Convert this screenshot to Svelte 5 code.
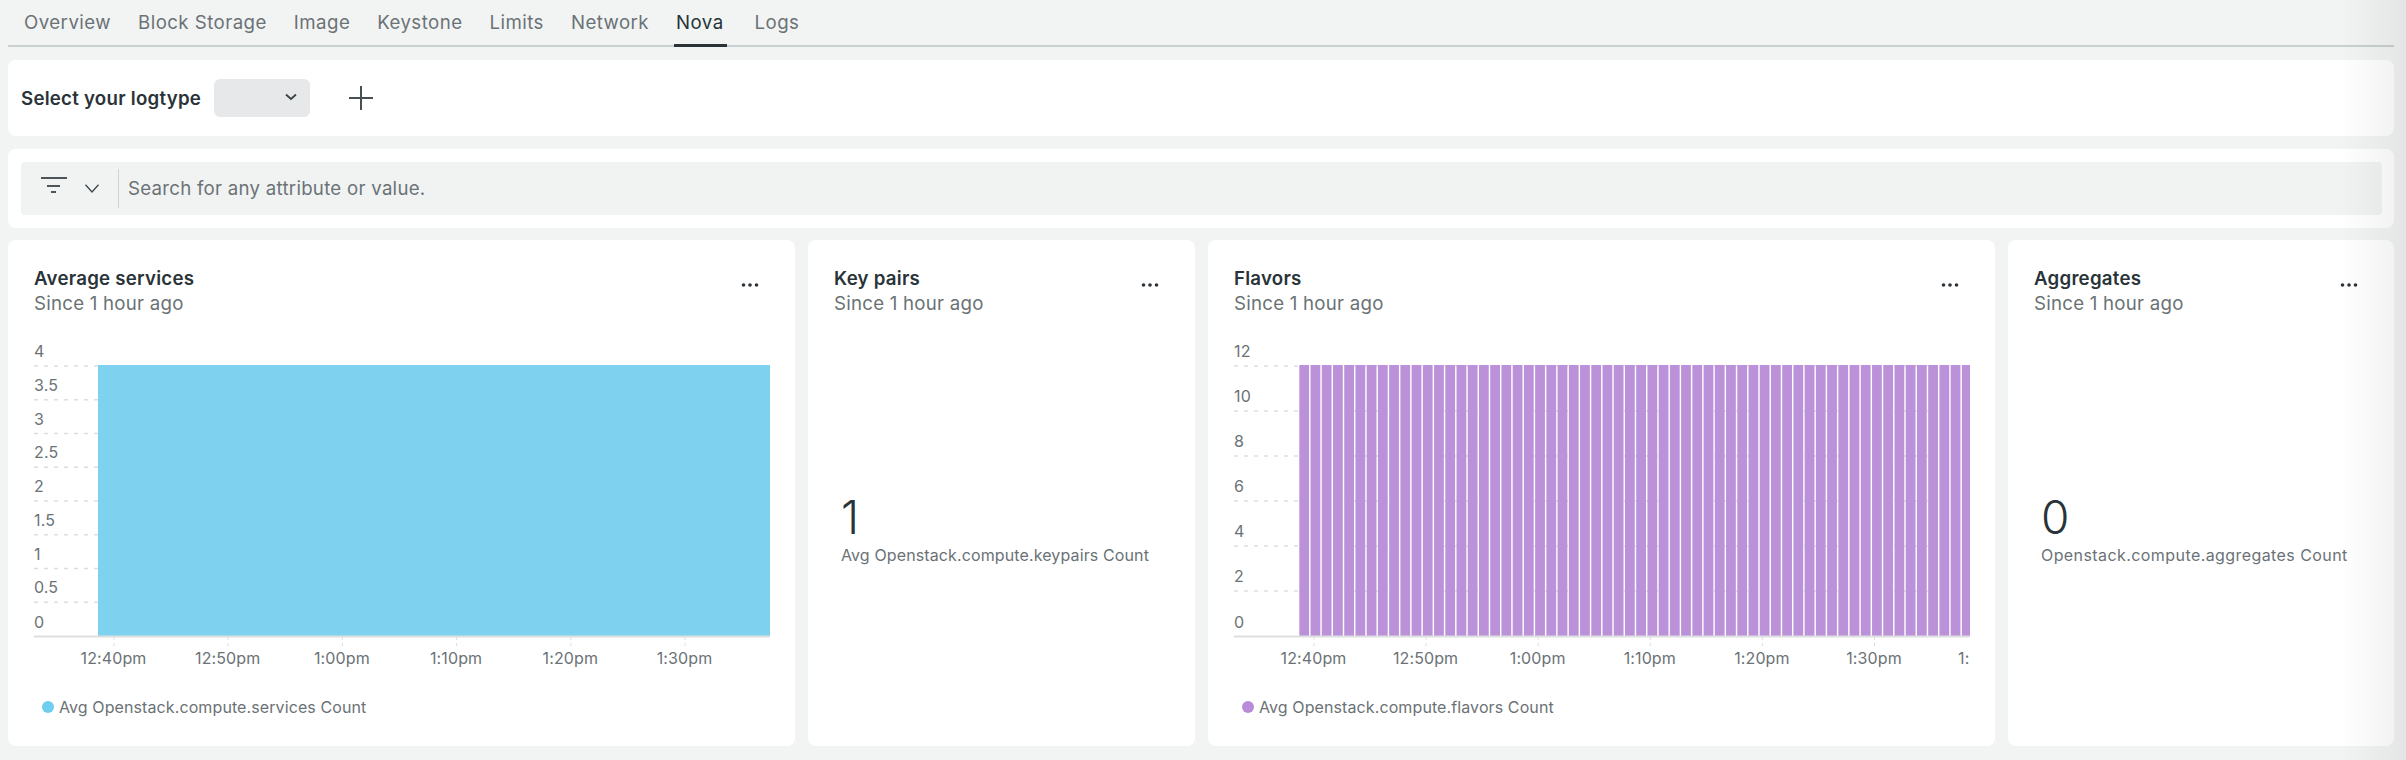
<script>
  const tabs = ['Overview', 'Block Storage', 'Image', 'Keystone', 'Limits', 'Network', 'Nova', 'Logs'];
  const blueGrid = ['4', '3.5', '3', '2.5', '2', '1.5', '1', '0.5', '0'].map((t, i) => ({ t, y: 26 + i * 33.75 }));
  const purpleGrid = ['12', '10', '8', '6', '4', '2', '0'].map((t, i) => ({ t, y: 26 + i * 45 }));
  const blueTicks = ['12:40pm', '12:50pm', '1:00pm', '1:10pm', '1:20pm', '1:30pm'].map((t, i) => ({ t, x: 80 + i * 114.2 }));
  const purpleTicks = ['12:40pm', '12:50pm', '1:00pm', '1:10pm', '1:20pm', '1:30pm', '1:40pm'].map((t, i) => ({ t, x: 80 + i * 112.1 }));
  const bars = Array.from({ length: 60 }, (_, i) => 65.3 + i * 11.23);
</script>

{#snippet dots()}
  <svg class="dots" width="20" height="6" viewBox="0 0 20 6" aria-hidden="true">
    <circle cx="3.5" cy="3" r="1.8" />
    <circle cx="10" cy="3" r="1.8" />
    <circle cx="16.5" cy="3" r="1.8" />
  </svg>
{/snippet}

{#snippet head(title)}
  <div class="head">
    <div>
      <div class="title">{title}</div>
      <div class="since">Since 1 hour ago</div>
    </div>
    {@render dots()}
  </div>
{/snippet}

{#snippet axes(grid, ticks)}
  {#each grid as g}
    {#if g.t !== '0'}
      <line class="grid" x1="0" x2="736" y1={g.y} y2={g.y} />
    {/if}
    <text class="lbl" x="0" y={g.t === '0' ? 288 : g.y - 9}>{g.t}</text>
  {/each}
  {#each ticks as k}
    <line class="tick" x1={k.x} x2={k.x} y1="297" y2="306" />
    <text class="lbl" x={k.x - 0.5} y="324" text-anchor="middle">{k.t}</text>
  {/each}
{/snippet}

<div class="page">
  <nav class="tabs">
    {#each tabs as t}
      <span class="tab" class:active={t === 'Nova'}>{t}</span>
    {/each}
  </nav>

  <section class="panel logbar">
    <span class="logtitle">Select your logtype</span>
    <div class="select">
      <svg width="12" height="8" viewBox="0 0 12 8" aria-hidden="true"><path d="M1 1.5 6 6l5-4.5" fill="none" stroke="#3a4446" stroke-width="1.8" /></svg>
    </div>
    <svg class="plus" width="24" height="24" viewBox="0 0 24 24" aria-hidden="true"><path d="M12 0v24M0 12h24" stroke="#465052" stroke-width="2" /></svg>
  </section>

  <section class="panel searchbar">
    <div class="search">
      <svg class="filter" width="26" height="16" viewBox="0 0 26 16" aria-hidden="true">
        <path d="M0 1h26" stroke="#4c5557" stroke-width="2" />
        <path d="M6 9h13" stroke="#4c5557" stroke-width="2" />
        <path d="M10 15h5" stroke="#4c5557" stroke-width="2" />
      </svg>
      <svg class="chev" width="14" height="9" viewBox="0 0 14 9" aria-hidden="true"><path d="M.5 .8 7 8l6.500-7.200" fill="none" stroke="#3f484a" stroke-width="1.300" /></svg>
      <span class="divider"></span>
      <span class="placeholder">Search for any attribute or value.</span>
    </div>
  </section>

  <div class="grid-cards">
    <article class="panel card">
      {@render head('Average services')}
      <svg class="chart" width="736" height="335" viewBox="0 0 736 335">
        {@render axes(blueGrid, blueTicks)}
        <rect x="64" y="25" width="672" height="271" fill="#7fd2ef" />
        <line class="axis" x1="0" x2="736" y1="296.500" y2="296.500" />
      </svg>
      <div class="legend"><i style="background:#6fcdee"></i>Avg Openstack.compute.services Count</div>
    </article>

    <article class="panel card">
      {@render head('Key pairs')}
      <div class="kpi">
        <div class="value">1</div>
        <div class="metric">Avg Openstack.compute.keypairs Count</div>
      </div>
    </article>

    <article class="panel card">
      {@render head('Flavors')}
      <svg class="chart" width="736" height="335" viewBox="0 0 736 335">
        {@render axes(purpleGrid, purpleTicks)}
        {#each bars as x}
          <rect {x} y="25" width="9.800" height="271" fill="#bb92d9" />
        {/each}
        <line class="axis" x1="0" x2="736" y1="296.500" y2="296.500" />
      </svg>
      <div class="legend"><i style="background:#b88cd8"></i>Avg Openstack.compute.flavors Count</div>
    </article>

    <article class="panel card">
      {@render head('Aggregates')}
      <div class="kpi">
        <div class="value">0</div>
        <div class="metric loose">Openstack.compute.aggregates Count</div>
      </div>
    </article>
  </div>

  <div class="fade"></div>
</div>

<style>
  :global(body) {
    margin: 0;
    background: #f2f4f4;
  }
  .page {
    position: relative;
    width: 2406px;
    height: 760px;
    box-sizing: border-box;
    padding: 0 12px 0 8px;
    font-family: Inter, "Noto Sans", sans-serif;
    color: #293338;
    overflow: hidden;
  }
  .tabs {
    display: flex;
    height: 47px;
    box-sizing: border-box;
    padding-left: 16px;
    gap: 27px;
    border-bottom: 2px solid #c9d0d0;
  }
  .tab {
    position: relative;
    font-size: 18.670px;
    letter-spacing: 0.450px;
    line-height: 46px;
    color: #6b7276;
    white-space: nowrap;
  }
  .tab.active {
    color: #293338;
    margin-right: 4px;
  }
  .tab.active::after {
    content: '';
    position: absolute;
    left: -2px;
    right: -3px;
    bottom: 0;
    height: 3px;
    background: #293338;
    transform: translateY(2px);
  }
  .panel {
    background: #fff;
    border-radius: 8px;
  }
  .logbar {
    display: flex;
    align-items: center;
    height: 76px;
    margin-top: 13px;
    padding-left: 13px;
  }
  .logtitle {
    font-size: 18.670px;
    letter-spacing: 0.250px;
    font-weight: 600;
  }
  .select {
    display: flex;
    align-items: center;
    justify-content: flex-end;
    width: 96px;
    height: 38px;
    box-sizing: border-box;
    margin-left: 13px;
    padding-right: 13px;
    padding-bottom: 3px;
    background: #e7e8ea;
    border-radius: 6px;
  }
  .plus {
    margin-left: 39px;
    margin-top: -1px;
  }
  .searchbar {
    height: 79px;
    margin-top: 13px;
    padding: 13px 12px 13px 13px;
    box-sizing: border-box;
  }
  .search {
    display: flex;
    align-items: center;
    height: 53px;
    background: #f1f3f3;
    border-radius: 4px;
    padding-left: 20px;
  }
  .filter {
    margin-top: -8px;
  }
  .chev {
    margin-left: 18px;
    margin-top: -1px;
  }
  .divider {
    width: 1px;
    height: 39px;
    margin-left: 19px;
    background: #cfd3d3;
  }
  .placeholder {
    margin-left: 9px;
    font-size: 18.670px;
    letter-spacing: 0.260px;
    color: #6b7276;
  }
  .grid-cards {
    display: grid;
    grid-template-columns: 787px 387px 787px 386px;
    gap: 13px;
    margin-top: 12px;
  }
  .card {
    height: 506px;
    box-sizing: border-box;
    padding: 27px 25px 0 26px;
    display: flex;
    flex-direction: column;
  }
  .head {
    display: flex;
    justify-content: space-between;
    align-items: flex-start;
    height: 73px;
  }
  .title {
    font-size: 18.670px;
    letter-spacing: 0.250px;
    font-weight: 600;
    line-height: 24px;
  }
  .since {
    font-size: 18.670px;
    letter-spacing: 0.240px;
    line-height: 26px;
    color: #6b7276;
  }
  .dots {
    margin-top: 15px;
    margin-right: 10px;
    fill: #293338;
  }
  .chart {
    display: block;
    overflow: hidden;
  }
  .lbl {
    font-size: 16px;
    letter-spacing: 0.120px;
    fill: #6b7276;
  }
  .grid {
    stroke: #dcdfdf;
    stroke-width: 1.500;
    stroke-dasharray: 4 6;
    stroke-dashoffset: 0;
  }
  .tick {
    stroke: #dcdfdf;
    stroke-dasharray: 3 3;
  }
  .axis {
    stroke: #dddfdf;
    stroke-width: 2;
  }
  .legend {
    display: flex;
    align-items: center;
    margin-top: 20px;
    margin-left: 8px;
    font-size: 16px;
    letter-spacing: 0.100px;
    line-height: 24px;
    color: #6b7276;
  }
  .legend i {
    width: 12px;
    height: 12px;
    border-radius: 50%;
    margin-right: 5px;
  }
  .kpi {
    padding: 151px 0 0 7px;
  }
  .value {
    font-size: 46px;
    line-height: 52px;
    font-weight: 300;
  }
  .metric {
    font-size: 16px;
    letter-spacing: 0.120px;
    line-height: 24px;
    color: #6b7276;
  }
  .metric.loose {
    letter-spacing: 0.420px;
  }
  .fade {
    position: absolute;
    top: 0;
    right: 0;
    bottom: 0;
    width: 66px;
    background: linear-gradient(to right, rgba(0, 0, 0, 0), rgba(0, 0, 0, 0.06));
    pointer-events: none;
  }
</style>
